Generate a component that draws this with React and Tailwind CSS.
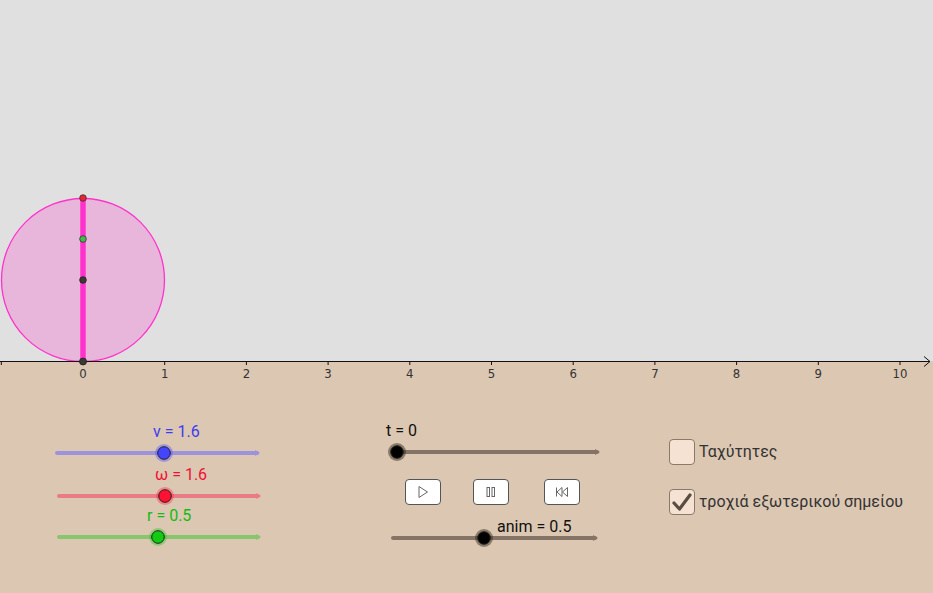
import React from 'react';

const UNIT = 81.7;
const ORIGIN_X = 83;
const AXIS_Y = 361.5;

const Graph = () => {
  const ticks = [];
  for (let k = -1; k <= 10; k++) ticks.push(k);
  return (
    <svg width="933" height="385" viewBox="0 0 933 385" className="block">
      <rect x="0" y="0" width="933" height={AXIS_Y} fill="#e0e0e0" />
      <rect x="0" y={AXIS_Y} width="933" height="30" fill="#dcc7b2" />
      <circle cx={ORIGIN_X} cy="280" r="81.5" fill="#e8b5db" stroke="#ff33cc" strokeWidth="1.3" />
      <line x1={ORIGIN_X} y1="198" x2={ORIGIN_X} y2={AXIS_Y} stroke="#ff33cc" strokeWidth="5.5" />
      <line x1="0" y1={AXIS_Y} x2="930" y2={AXIS_Y} stroke="#111" strokeWidth="1" />
      <polyline points="924,356.5 930,361.5 924,366.5" fill="none" stroke="#111" strokeWidth="1" />
      {ticks.map(k => {
        const x = ORIGIN_X + k * UNIT;
        return (
          <g key={k}>
            <line x1={x} y1={AXIS_Y} x2={x} y2={AXIS_Y + 3.5} stroke="#111" strokeWidth="1" />
            {k >= 0 && (
              <text
                x={x}
                y="377.5"
                textAnchor="middle"
                fontSize="13"
                fill="#333"
                style={{ fontFamily: '"DejaVu Sans Condensed", "Liberation Sans Narrow", sans-serif', fontStretch: 'condensed' }}
              >
                {k}
              </text>
            )}
          </g>
        );
      })}
      <circle cx={ORIGIN_X} cy="198" r="3.3" fill="#ee2233" stroke="#333" strokeWidth="0.8" />
      <circle cx={ORIGIN_X} cy="239" r="3.3" fill="#44bb44" stroke="#333" strokeWidth="0.8" />
      <circle cx={ORIGIN_X} cy="280" r="3.3" fill="#3a3a32" stroke="#222" strokeWidth="0.8" />
      <circle cx={ORIGIN_X} cy={AXIS_Y} r="3.5" fill="#3a3a32" stroke="#222" strokeWidth="0.8" />
    </svg>
  );
};

const Track = ({ x1, x2, knob, track, fill, halo, height = 22 }) => {
  const cy = height / 2;
  return (
    <svg width="240" height={height} className="block overflow-visible">
      <line x1={x1} y1={cy} x2={x2 - 3} y2={cy} stroke={track} strokeWidth="4" strokeLinecap="round" />
      <polygon points={`${x2 - 5},${cy - 3} ${x2},${cy} ${x2 - 5},${cy + 3}`} fill={track} />
      <circle cx={knob} cy={cy} r="9" fill={halo} />
      <circle cx={knob} cy={cy} r="6.3" fill={fill} stroke="#222" strokeWidth="1" />
    </svg>
  );
};

const Slider = ({ label, color, labelX, ...rest }) => (
  <div className="flex flex-col">
    <div className="h-5 leading-5 text-[16px]" style={{ paddingLeft: labelX, color }}>
      {label}
    </div>
    <Track {...rest} />
  </div>
);

const Button = ({ children }) => (
  <div className="flex h-[26px] w-[36px] items-center justify-center rounded-[4px] border-[1.5px] border-[#555] bg-white">
    {children}
  </div>
);

const Checkbox = ({ checked, label }) => (
  <div className="flex items-center gap-[4px]">
    <div className="flex h-[26px] w-[26px] items-center justify-center rounded-[4px] border-[1.5px] border-[#8a7868] bg-[#f5e2d3]">
      {checked && (
        <svg width="22" height="22" viewBox="0 0 22 22">
          <path d="M3 12 L8.5 18 L19 4" fill="none" stroke="#5a4c40" strokeWidth="3.2" strokeLinecap="round" strokeLinejoin="round" />
        </svg>
      )}
    </div>
    <span className="text-[16px] text-[#333]">{label}</span>
  </div>
);

export default function App() {
  return (
    <div
      className="flex h-[593px] w-[933px] flex-col overflow-hidden bg-[#dcc7b2]"
      style={{ fontFamily: 'Roboto, "Noto Sans", sans-serif' }}
    >
      <Graph />
      <div className="flex flex-1 items-start">
        <div className="ml-[50px] mt-[37px] flex w-[240px] flex-col">
          <Slider label="v = 1.6" color="#3c3cf0" labelX={103} x1={7} x2={210} knob={114} track="#9c93dc" fill="#4444ff" halo="rgba(90,90,255,0.45)" />
          <div className="mt-[1px]">
            <Slider label="ω = 1.6" color="#ee1133" labelX={105} x1={9} x2={211} knob={115} track="#ea7b86" fill="#ff1133" halo="rgba(255,40,70,0.4)" />
          </div>
          <div className="-mt-[1px]">
            <Slider label="r = 0.5" color="#11bb11" labelX={97} x1={9} x2={211} knob={108} track="#88c56c" fill="#11cc11" halo="rgba(40,200,40,0.4)" />
          </div>
        </div>
        <div className="ml-[90px] mt-[36px] flex w-[240px] flex-col">
          <Slider label="t = 0" color="#111" labelX={6} x1={17} x2={220} knob={17} track="#857466" fill="#000" halo="rgba(40,30,20,0.45)" />
          <div className="mt-[16px] flex gap-[32px] pl-[25px]">
            <Button>
              <svg width="12" height="14" viewBox="0 0 12 14">
                <path d="M2 1.5 L10.5 7 L2 12.5 Z" fill="none" stroke="#666" strokeWidth="1" />
              </svg>
            </Button>
            <Button>
              <svg width="12" height="12" viewBox="0 0 12 12">
                <rect x="2" y="1.5" width="2.5" height="9" fill="none" stroke="#666" strokeWidth="1" />
                <rect x="7" y="1.5" width="2.5" height="9" fill="none" stroke="#666" strokeWidth="1" />
              </svg>
            </Button>
            <div className="ml-[3px]">
              <Button>
                <svg width="14" height="12" viewBox="0 0 14 12">
                  <line x1="1.5" y1="1.5" x2="1.5" y2="10.5" stroke="#666" strokeWidth="1" />
                  <path d="M7 1.5 L2 6 L7 10.5 Z" fill="none" stroke="#666" strokeWidth="1" />
                  <path d="M12.5 1.5 L7.5 6 L12.5 10.5 Z" fill="none" stroke="#666" strokeWidth="1" />
                </svg>
              </Button>
            </div>
          </div>
          <div className="mt-[14px] h-4 pl-[117px] text-[16px] leading-4 text-[#111]">anim = 0.5</div>
          <Track x1={13} x2={218} knob={104} track="#857466" fill="#000" halo="rgba(40,30,20,0.45)" height={6} />
        </div>
        <div className="ml-[49px] mt-[54px] flex flex-col gap-[24px]">
          <Checkbox label="Ταχύτητες" />
          <Checkbox checked label="τροχιά εξωτερικού σημείου" />
        </div>
      </div>
    </div>
  );
}
